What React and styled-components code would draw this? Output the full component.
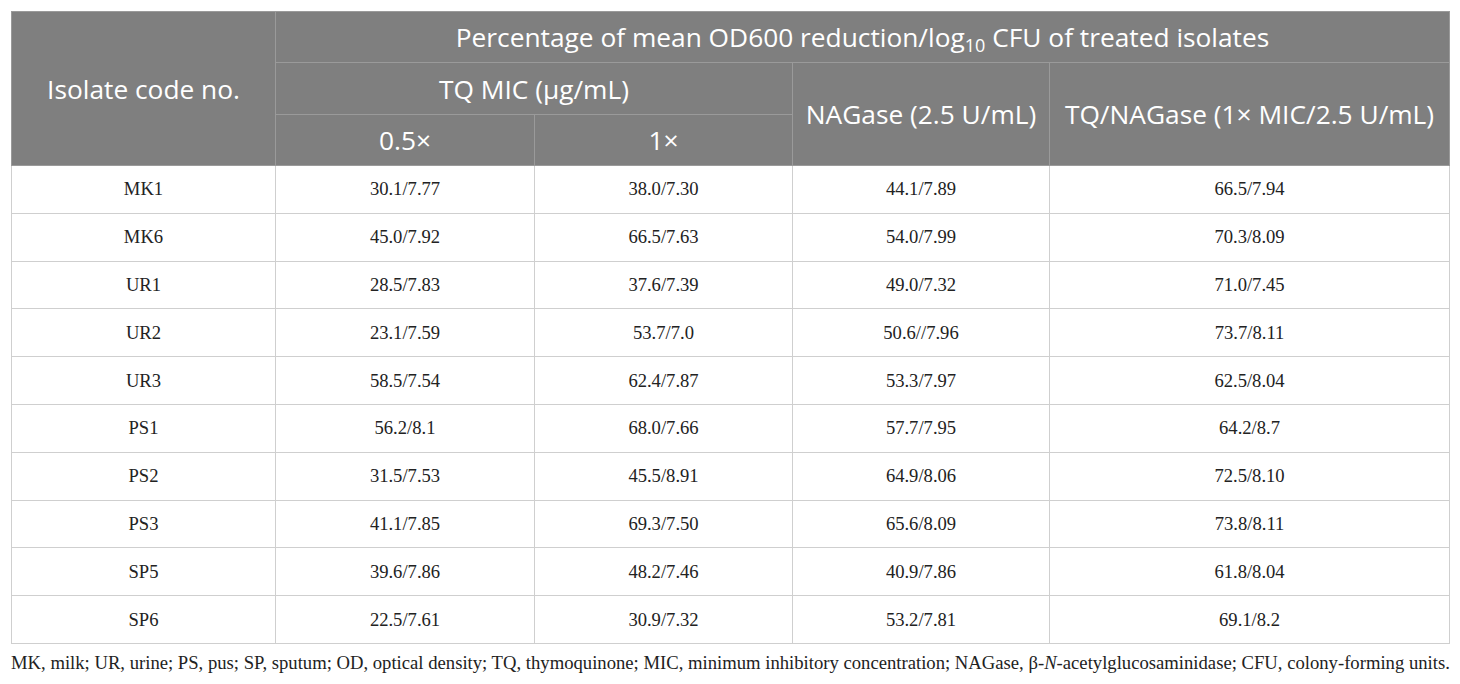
import styled, { createGlobalStyle } from 'styled-components';

const Global = createGlobalStyle`
  body {
    margin: 0;
    background: #fff;
  }
`

const Page = styled.div`
  padding: 11px 11px 0 11px;
  width: 1438px;
`

const Table = styled.table`
  width: 1438px;
  border-collapse: collapse;
  table-layout: fixed;
`

const Head = styled.th`
  background: #7f7f7f;
  color: #fff;
  font-family: 'Open Sans', 'Noto Sans', sans-serif;
  font-weight: 400;
  font-size: 26.3px;
  line-height: 30px;
  height: ${props => props.h || 50}px;
  padding: 0;
  text-align: center;
  border: 1px solid #9a9a9a;
  vertical-align: middle;
  white-space: nowrap;
  sub {
    font-size: 18px;
    vertical-align: -5px;
    line-height: 0;
  }
`

const Cell = styled.td`
  font-family: 'Liberation Serif', 'Times New Roman', serif;
  font-size: 18.6px;
  color: #222;
  text-align: center;
  height: 46.8px;
  padding: 0;
  border: 1px solid #cfcfcf;
`

const Note = styled.p`
  margin: 8px 0 0 0;
  font-family: 'Liberation Serif', 'Times New Roman', serif;
  font-size: 18.66px;
  color: #222;
  white-space: nowrap;
`

const rows = [
  ['MK1', '30.1/7.77', '38.0/7.30', '44.1/7.89', '66.5/7.94'],
  ['MK6', '45.0/7.92', '66.5/7.63', '54.0/7.99', '70.3/8.09'],
  ['UR1', '28.5/7.83', '37.6/7.39', '49.0/7.32', '71.0/7.45'],
  ['UR2', '23.1/7.59', '53.7/7.0', '50.6//7.96', '73.7/8.11'],
  ['UR3', '58.5/7.54', '62.4/7.87', '53.3/7.97', '62.5/8.04'],
  ['PS1', '56.2/8.1', '68.0/7.66', '57.7/7.95', '64.2/8.7'],
  ['PS2', '31.5/7.53', '45.5/8.91', '64.9/8.06', '72.5/8.10'],
  ['PS3', '41.1/7.85', '69.3/7.50', '65.6/8.09', '73.8/8.11'],
  ['SP5', '39.6/7.86', '48.2/7.46', '40.9/7.86', '61.8/8.04'],
  ['SP6', '22.5/7.61', '30.9/7.32', '53.2/7.81', '69.1/8.2'],
]

const App = () => {
  return (
    <Page>
      <Global />
      <Table>
        <colgroup>
          <col style={{ width: 264 }} />
          <col style={{ width: 259 }} />
          <col style={{ width: 258 }} />
          <col style={{ width: 257 }} />
          <col style={{ width: 400 }} />
        </colgroup>
        <thead>
          <tr>
            <Head rowSpan={3}>Isolate code no.</Head>
            <Head colSpan={4}>Percentage of mean OD600 reduction/log<sub>10</sub> CFU of treated isolates</Head>
          </tr>
          <tr>
            <Head colSpan={2} h={51}>TQ MIC (µg/mL)</Head>
            <Head rowSpan={2}>NAGase (2.5 U/mL)</Head>
            <Head rowSpan={2}>TQ/NAGase (1× MIC/2.5 U/mL)</Head>
          </tr>
          <tr>
            <Head>0.5×</Head>
            <Head>1×</Head>
          </tr>
        </thead>
        <tbody>
          {rows.map(r => (
            <tr key={r[0]}>
              {r.map((v, i) => <Cell key={i}>{v}</Cell>)}
            </tr>
          ))}
        </tbody>
      </Table>
      <Note>
        MK, milk; UR, urine; PS, pus; SP, sputum; OD, optical density; TQ, thymoquinone; MIC, minimum inhibitory concentration; NAGase, β-<i>N</i>-acetylglucosaminidase; CFU, colony-forming units.
      </Note>
    </Page>
  )
}

export default App;
